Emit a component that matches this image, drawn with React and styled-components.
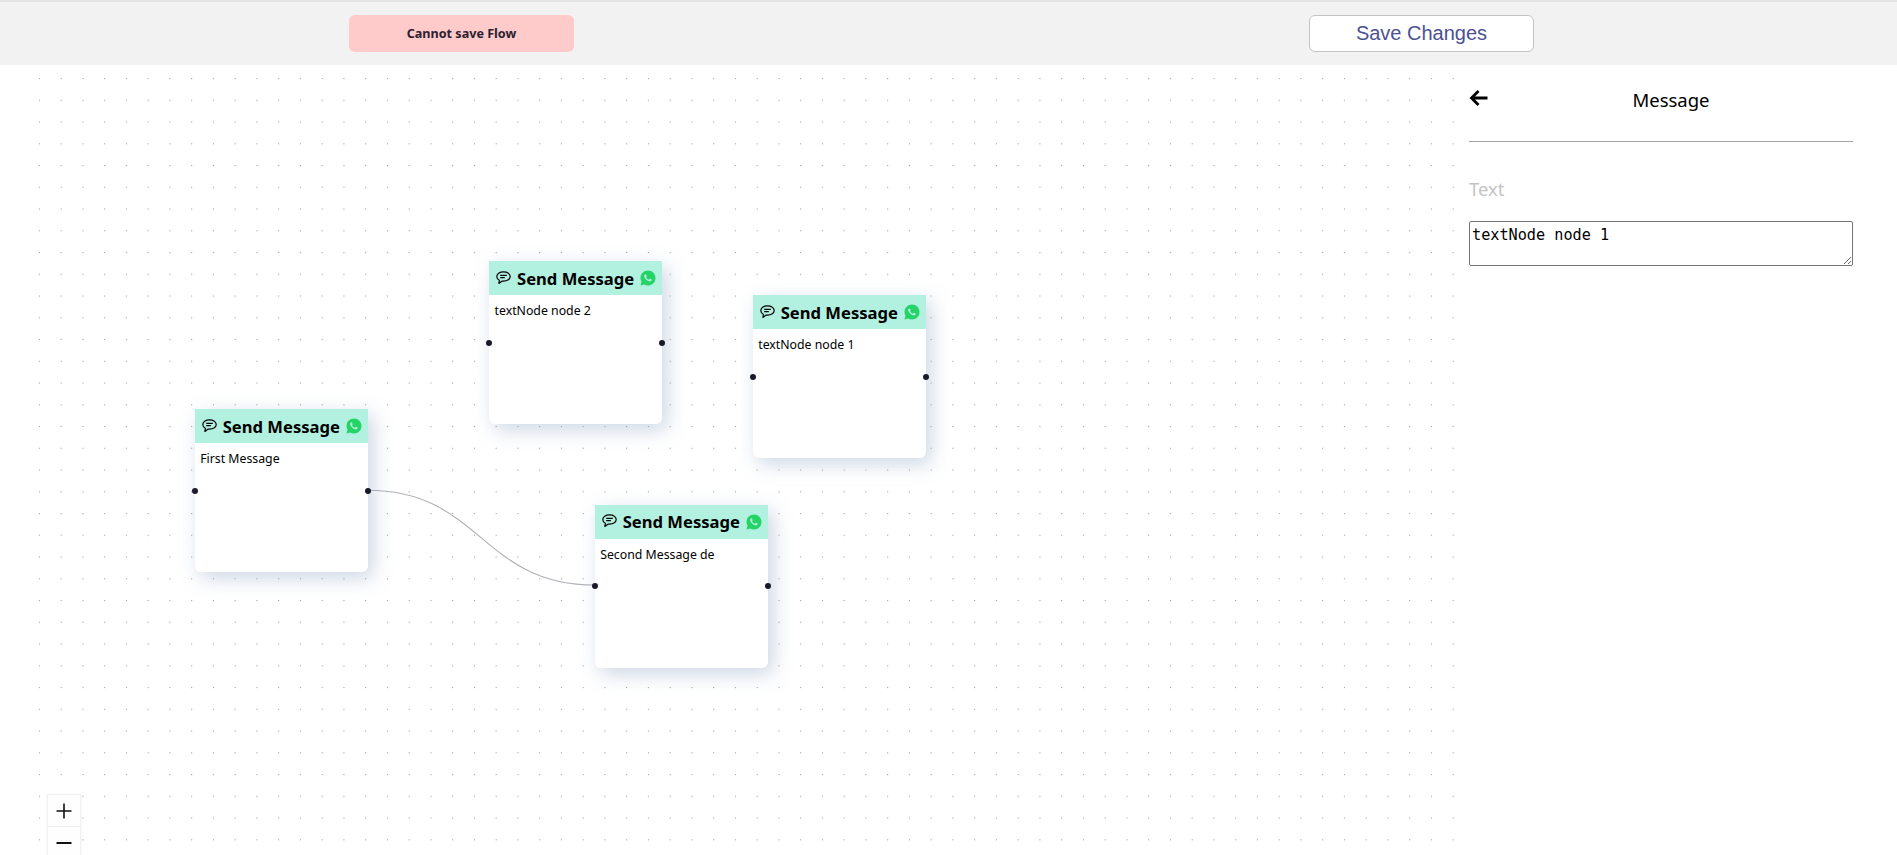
import React from "react";
import styled, { createGlobalStyle } from "styled-components";
import { RiWhatsappFill } from "react-icons/ri";

const Global = createGlobalStyle`
  html, body { margin: 0; padding: 0; height: 100%; overflow: hidden; background: #fff; }
  body { font-family: "Noto Sans", "Open Sans", sans-serif; color: #000; }
  #root { height: 100%; }
`;

const Page = styled.div`
  height: 855px;
  overflow: hidden;
  display: flex;
  flex-direction: column;
`;

const TopBar = styled.header`
  flex: none;
  height: 63px;
  border-top: 2px solid #e4e4e4;
  background: #f2f2f2;
  position: relative;
  display: grid;
  grid-template-columns: 349px 225px 735px 225px 1fr;
  align-items: center;
`;

const ErrorBadge = styled.div`
  grid-column: 2;
  height: 37px;
  border-radius: 6px;
  background: #fecaca;
  color: #2b2130;
  font-size: 12.6px;
  font-weight: 700;
  display: flex;
  align-items: center;
  justify-content: center;
`;

const SaveButton = styled.button`
  grid-column: 4;
  height: 37px;
  border: 1px solid #c4c4c8;
  border-radius: 6px;
  background: #fff;
  color: #4b5193;
  font-family: "Liberation Sans", Arial, sans-serif;
  font-size: 20px;
  padding: 0;
`;

const Body = styled.main`
  flex: 1;
  display: flex;
  min-height: 0;
`;

const Canvas = styled.section`
  flex: none;
  position: relative;
  width: 1418px;
  height: 830px;
  margin-left: 38px;
`;

const Grid = styled.svg`
  position: absolute;
  inset: 0;
  width: 100%;
  height: 100%;
`;

const NodeCard = styled.article`
  position: absolute;
  width: 173px;
  height: 163px;
  background: #fff;
  border-radius: 0 0 6px 6px;
  box-shadow: 5px 6px 20px rgba(120, 150, 185, 0.38);
`;

const NodeHeader = styled.div`
  box-sizing: border-box;
  height: 34px;
  padding: 1px 0 0 7px;
  background: #b2f0e0;
  display: flex;
  align-items: center;
  gap: 6px;
  font-size: 16.6px;
  line-height: 24px;
  font-weight: 700;
  white-space: nowrap;
`;

const NodeText = styled.div`
  padding: 7px 5.5px;
  font-size: 12.3px;
  line-height: 17px;
`;

const Handle = styled.span`
  position: absolute;
  top: 78.5px;
  width: 6px;
  height: 6px;
  border-radius: 50%;
  background: #1a192b;
  ${(p) => (p.$side === "left" ? "left: -3px;" : "right: -3px;")}
`;

const Edges = styled.svg`
  position: absolute;
  inset: 0;
  width: 100%;
  height: 100%;
  pointer-events: none;
`;

const Controls = styled.div`
  position: absolute;
  left: 10px;
  top: 730px;
  width: 32px;
  box-shadow: 0 0 2px 1px rgba(0, 0, 0, 0.08);
`;

const ControlButton = styled.button`
  display: flex;
  align-items: center;
  justify-content: center;
  width: 32px;
  height: 32px;
  padding: 0;
  border: none;
  border-bottom: 1px solid #eee;
  background: #fefefe;
`;

const Panel = styled.aside`
  flex: 1;
  position: relative;
  padding: 0 44px 0 13px;
`;

const PanelHead = styled.div`
  height: 77px;
  border-bottom: 1px solid #a3a3a3;
  position: relative;
  display: flex;
  justify-content: center;
  padding: 22px 0 0 20px;
  box-sizing: border-box;
  font-size: 18.5px;
  line-height: 26px;
`;

const BackIcon = styled.svg`
  position: absolute;
  left: 0;
  top: 23px;
`;

const FieldLabel = styled.label`
  display: block;
  margin-top: 34px;
  color: #c4c4c4;
  font-size: 18.5px;
  line-height: 25px;
`;

const Area = styled.textarea`
  display: block;
  box-sizing: border-box;
  width: 100%;
  height: 45px;
  margin-top: 20px;
  padding: 4px 2px 1px;
  border: 1px solid #767676;
  border-radius: 2px;
  font-family: "DejaVu Sans Mono", monospace;
  font-size: 15.2px;
  line-height: 18px;
  color: #000;
  outline: none;
`;

const nodes = [
  { id: 1, x: 156.7, y: 344, text: "First Message" },
  { id: 2, x: 451, y: 196.3, text: "textNode node 2" },
  { id: 3, x: 714.7, y: 230, text: "textNode node 1" },
  { id: 4, x: 556.7, y: 439.7, text: "Second Message de" },
];

function DotGrid() {
  return (
    <Grid aria-hidden="true">
      <defs>
        <pattern id="dots" x="0.9" y="13" width="21.75" height="21.75" patternUnits="userSpaceOnUse">
          <circle cx="0.6" cy="0.6" r="0.55" fill="#81818a" />
        </pattern>
      </defs>
      <rect width="100%" height="100%" fill="url(#dots)" />
    </Grid>
  );
}

function ChatIcon() {
  return (
    <svg width="15" height="14" viewBox="0 0 15 14" style={{ flex: "none", marginTop: -2 }}>
      <path
        d="M7.5.8C3.6.8.8 2.9.8 5.5c0 1.6 1 3 2.6 3.8l-.5 3.2 3.3-2.4h1.3c3.9 0 6.7-2 6.7-4.6S11.4.8 7.5.8Z"
        fill="none"
        stroke="#000"
        strokeWidth="1.2"
        strokeLinejoin="round"
      />
      <path d="M4.2 4.3h6.6M4.2 6.7h4.6" fill="none" stroke="#000" strokeWidth="1.2" />
    </svg>
  );
}

function FlowNode({ x, y, text }) {
  return (
    <NodeCard style={{ left: x, top: y }}>
      <NodeHeader>
        <ChatIcon />
        <span>Send Message</span>
        <RiWhatsappFill size={18} color="#25d366" style={{ marginLeft: -1, marginTop: -1 }} />
      </NodeHeader>
      <NodeText>{text}</NodeText>
      <Handle $side="left" />
      <Handle $side="right" />
    </NodeCard>
  );
}

export default function App() {
  return (
    <Page>
      <Global />
      <TopBar>
        <ErrorBadge>Cannot save Flow</ErrorBadge>
        <SaveButton>Save Changes</SaveButton>
      </TopBar>
      <Body>
        <Canvas>
          <DotGrid />
          <Edges aria-hidden="true">
            <path
              d="M329.5 425.3 C 443 425.3, 443 520, 556.7 520"
              fill="none"
              stroke="#b1b1b7"
              strokeWidth="1.1"
            />
          </Edges>
          {nodes.map((n) => (
            <FlowNode key={n.id} {...n} />
          ))}
          <Controls>
            <ControlButton aria-label="zoom in">
              <svg width="16" height="16" viewBox="0 0 16 16">
                <path d="M8 .5v15M.5 8h15" stroke="#111" strokeWidth="1.6" fill="none" />
              </svg>
            </ControlButton>
            <ControlButton aria-label="zoom out">
              <svg width="16" height="16" viewBox="0 0 16 16">
                <path d="M.5 8h15" stroke="#111" strokeWidth="2" fill="none" />
              </svg>
            </ControlButton>
          </Controls>
        </Canvas>
        <Panel>
          <PanelHead>
            <BackIcon width="20" height="20" viewBox="0 0 20 20">
              <path d="M18.5 10H2.5M9.5 3 2.5 10l7 7" fill="none" stroke="#000" strokeWidth="2.8" />
            </BackIcon>
            Message
          </PanelHead>
          <FieldLabel>Text</FieldLabel>
          <Area defaultValue="textNode node 1" />
        </Panel>
      </Body>
    </Page>
  );
}
